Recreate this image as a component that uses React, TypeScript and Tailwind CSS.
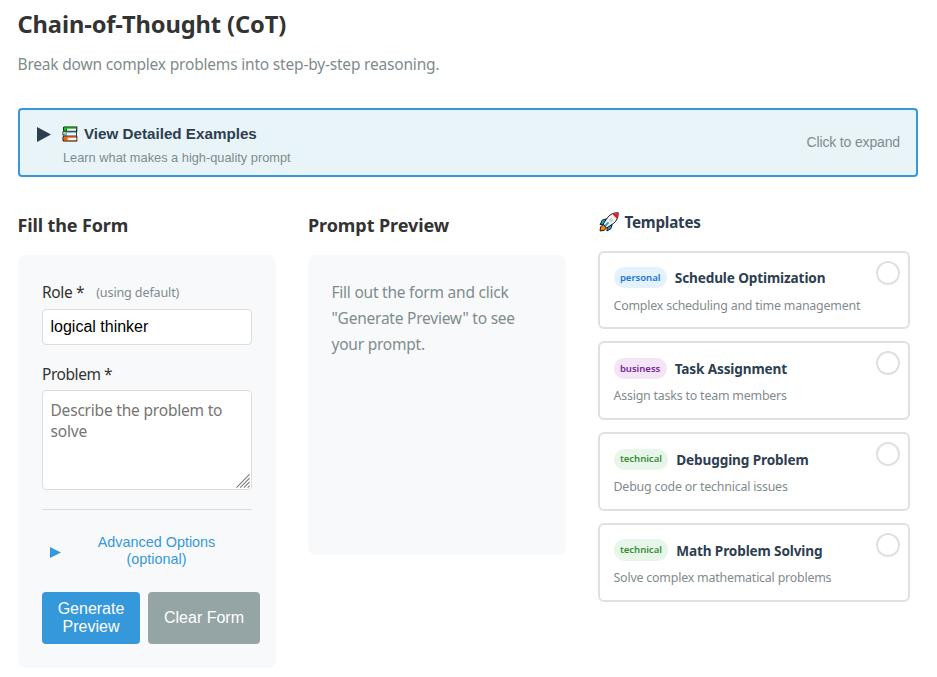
import { useState } from 'react';
import clsx from 'clsx';

interface Template {
  id: number;
  category: 'personal' | 'business' | 'technical';
  title: string;
  description: string;
}

const templates: Template[] = [
  {
    id: 1,
    category: 'personal',
    title: 'Schedule Optimization',
    description: 'Complex scheduling and time management',
  },
  {
    id: 2,
    category: 'business',
    title: 'Task Assignment',
    description: 'Assign tasks to team members',
  },
  {
    id: 3,
    category: 'technical',
    title: 'Debugging Problem',
    description: 'Debug code or technical issues',
  },
  {
    id: 4,
    category: 'technical',
    title: 'Math Problem Solving',
    description: 'Solve complex mathematical problems',
  },
];

const badgeColors = {
  personal: 'bg-[#e3f2fd] text-[#1976d2]',
  business: 'bg-[#f3e5f5] text-[#7b1fa2]',
  technical: 'bg-[#e8f5e9] text-[#388e3c]',
};

const BooksIcon = () => (
  <svg width="16" height="16" viewBox="0 0 16 16" className="shrink-0">
    <path d="M2 .5h13.300v5h-.5v4.500h.5v5.500H1.500L.5 14.500V11l1-1-1-1V6l1-1L1 4V1.500z" fill="#111" />
    <path d="M2.500 1.200h12v1.600H4.500v1.900H1.800V2z" fill="#16c60c" />
    <path d="M5 2.600h9.200v2.200H5z" fill="#f5f5f5" />
    <path d="M2.500 5.500h11.300v1.300H4.500v2.900H1.300V6.200z" fill="#3bb5e8" />
    <path d="M1.300 6.200h2.200V8H1.300z" fill="#ffd43a" />
    <path d="M4.500 6.600h9.500v3H4.500z" fill="#f5f5f5" />
    <path d="M2.500 10.200h12v1.600H5.500v2.200h9v.8H2.500l-1.200-.8v-2.800z" fill="#f7630c" />
    <path d="M5.500 11.600h9v2.500h-9z" fill="#f5f5f5" />
  </svg>
);

const RocketIcon = () => (
  <svg width="20" height="20" viewBox="0 0 19 19" className="shrink-0">
    <path d="M1 18l.5-4L4 12l3 3-2 2.500z" fill="#f7830c" stroke="#111" strokeWidth=".9" />
    <path d="M7 6.500L3 7.800 1 12l4-.5zM12.500 12l-1.300 4L7.500 18l.5-4z" fill="#1ba1e2" stroke="#111" strokeWidth=".9" />
    <path d="M18.300.7c-4-.3-7.500 1.300-10 4.300L4 11.500 7.500 15l6.500-4.300c3-2.500 4.500-6 4.300-10z" fill="#f5f5f5" stroke="#111" strokeWidth=".9" />
    <path d="M17.900 1.100c-2-.1-3.700.2-5.200.8l4.400 4.400c.6-1.500.9-3.200.8-5.200z" fill="#e81224" />
    <circle cx="11.500" cy="7.500" r="1.900" fill="#cfcfcf" />
    <path d="M6 13l3-3" stroke="#1ba1e2" strokeWidth="1.800" />
  </svg>
);

const TemplateCard = ({
  template,
  selected,
  onSelect,
}: {
  template: Template;
  selected: boolean;
  onSelect: () => void;
}) => (
  <div
    onClick={onSelect}
    className="relative h-[78.850px] cursor-pointer rounded-md border-2 border-[#e0e0e0] bg-white px-[13.500px] pt-[13px]"
  >
    <div className="flex h-[24px] items-center gap-2">
      <span
        className={clsx(
          'flex h-[21.500px] items-center rounded-full px-[6.400px] text-[9.600px] font-semibold tracking-[-0.050px]',
          badgeColors[template.category]
        )}
      >
        {template.category}
      </span>
      <h4 className="pt-[0.600px] text-[13.600px] font-bold tracking-[-0.130px] whitespace-nowrap text-[#2c3e50]">
        {template.title}
      </h4>
    </div>
    <p className="mt-[6px] text-[12.400px] leading-[20px] tracking-[-0.200px] whitespace-nowrap text-[#7f8c8d]">
      {template.description}
    </p>
    <span
      className={clsx(
        'absolute top-2 right-2 h-6 w-6 rounded-full border-2 border-[#e0e0e0]',
        selected ? 'bg-[#3498db]' : 'bg-white'
      )}
    />
  </div>
);

const App = () => {
  const [role, setRole] = useState('logical thinker');
  const [problem, setProblem] = useState('');
  const [selected, setSelected] = useState<number | null>(null);

  const clearForm = () => {
    setRole('');
    setProblem('');
    setSelected(null);
  };

  return (
    <div className="h-[677px] overflow-hidden bg-white pr-[19px] pl-[18px] font-['Noto_Sans','Open_Sans',sans-serif] text-[15.500px] leading-[25.600px] text-[#333]">
      <h1 className="-ml-[0.500px] pt-[5px] text-[23.700px] leading-[38px] font-bold tracking-[-0.120px]">
        Chain-of-Thought (CoT)
      </h1>
      <p className="mt-[9px] -ml-[0.500px] tracking-[-0.190px] text-[#7f8c8d]">
        Break down complex problems into step-by-step reasoning.
      </p>

      <button className="mt-[30px] flex h-[69px] w-full cursor-pointer items-center rounded-[4px] border-2 border-[#3498db] bg-[#e8f4f8] px-4 text-left font-['Liberation_Sans',sans-serif]">
        <svg width="14" height="15" viewBox="0 0 14 15" className="mb-[16px] ml-px shrink-0">
          <path d="M0 0l14 7.500L0 15z" fill="#2c3e50" />
        </svg>
        <span className="ml-[11px] flex flex-col pt-[6px]">
          <span className="flex h-[18px] items-center gap-[6px] text-[15.200px] font-bold text-[#2c3e50]">
            <BooksIcon />
            View Detailed Examples
          </span>
          <span className="mt-[7px] pl-px text-[12.800px] leading-[16px] text-[#7f8c8d]">
            Learn what makes a high-quality prompt
          </span>
        </span>
        <span className="ml-auto pt-[2px] text-[14px] tracking-[-0.150px] text-[#7f8c8d]">Click to expand</span>
      </button>

      <div className="mt-[32px] grid grid-cols-[258px_258px_312px] items-start gap-8">
        <section>
          <h2 className="-ml-[0.500px] h-[46px] pt-[4px] text-[18px] font-bold tracking-[-0.130px]">Fill the Form</h2>
          <div className="h-[413px] rounded-lg bg-[#f8f9fb] px-6 pt-[25px]">
            <label className="flex h-[26px] items-center">
              <span className="tracking-[-0.350px]">Role *</span>
              <span className="ml-3 pt-px text-[12.600px] tracking-[-0.150px] text-[#7f8c8d]">(using default)</span>
            </label>
            <input
              value={role}
              onChange={(e) => setRole(e.target.value)}
              className="mt-[3px] block h-[36px] w-full rounded-[4px] border border-[#ddd] bg-white px-[7.500px] font-['Liberation_Sans',sans-serif] text-[16px] text-black outline-none"
            />
            <label className="mt-[17px] block tracking-[-0.450px]">Problem *</label>
            <div className="relative mt-[3px]">
              <textarea
                value={problem}
                onChange={(e) => setProblem(e.target.value)}
                placeholder="Describe the problem to solve"
                className="block h-[100px] w-full resize-none rounded-[4px] border border-[#ddd] bg-white px-[7.500px] pt-[9px] leading-[21px] tracking-[-0.200px] outline-none placeholder:text-[#757575]"
              />
              <svg width="14" height="14" viewBox="0 0 15 15" className="pointer-events-none absolute right-[2px] bottom-[2px]">
                <path d="M.5 14.500l14-14M4.500 14.500l10-10M8.500 14.500l6-6M12.500 14.500l2-2" stroke="#777" strokeWidth="1.100" />
              </svg>
            </div>
            <div className="mt-[19px] border-t border-[#ddd] pt-[15px]">
              <button className="flex h-[51px] w-full items-center px-2 font-['Liberation_Sans',sans-serif] text-[14.400px] leading-[17px] text-[#3498db]">
                <svg width="11" height="11" viewBox="0 0 11 11" className="mt-[3px] shrink-0">
                  <path d="M0 0l11 5.500L0 11z" fill="#3498db" />
                </svg>
                <span className="ml-[8px] flex-1 text-center">
                  Advanced Options
                  <br />
                  (optional)
                </span>
              </button>
            </div>
            <div className="mt-4 flex w-[218px] gap-2 font-['Liberation_Sans',sans-serif] text-[16px] leading-[18px] text-white">
              <button className="h-[52px] w-[98px] shrink-0 rounded-[4px] bg-[#3498db]">
                Generate
                <br />
                Preview
              </button>
              <button onClick={clearForm} className="h-[52px] w-[112px] shrink-0 rounded-[4px] bg-[#95a5a6]">
                Clear Form
              </button>
            </div>
          </div>
        </section>

        <section>
          <h2 className="h-[46px] pt-[4px] text-[18px] font-bold tracking-[-0.080px]">Prompt Preview</h2>
          <div className="h-[300px] rounded-lg bg-[#f8f9fb] p-6">
            <p className="-ml-[0.500px] leading-[26px] tracking-[-0.230px] whitespace-nowrap text-[#7f8c8d]">
              Fill out the form and click
              <br />
              "Generate Preview" to see
              <br />
              your prompt.
            </p>
          </div>
        </section>

        <section>
          <h3 className="flex h-[42px] items-start gap-[6px] pt-[3px] pl-[0.500px] text-[15.200px] leading-[20px] font-bold tracking-[-0.200px] text-[#2c3e50]">
            <RocketIcon />
            Templates
          </h3>
          <div className="flex flex-col gap-3">
            {templates.map((template) => (
              <TemplateCard
                key={template.id}
                template={template}
                selected={selected === template.id}
                onSelect={() => setSelected(template.id)}
              />
            ))}
          </div>
        </section>
      </div>
    </div>
  );
};

export default App;
